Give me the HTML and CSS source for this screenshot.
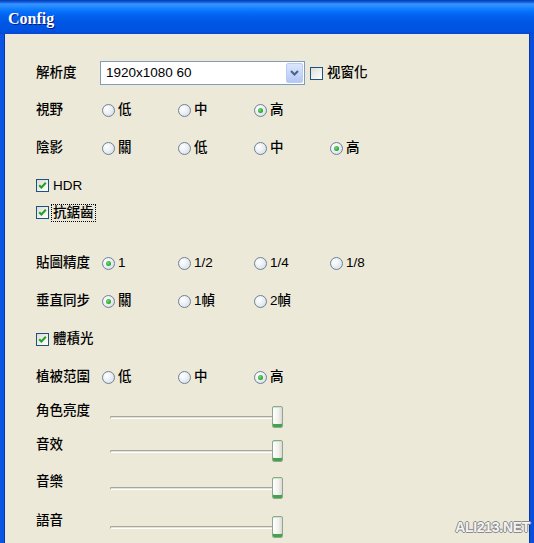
FILE: index.html
```html
<!DOCTYPE html>
<html>
<head>
<meta charset="utf-8">
<link rel="stylesheet" href="styles.css">
</head>
<body>
<div class="window">
  <div class="titlebar"><span class="title">Config</span></div>
  <div class="client">
    <div class="row row-res">
      <span class="label label-res">解析度</span>
      <div class="select">
        <span class="select-text">1920x1080 60</span>
        <span class="select-btn"><svg width="9" height="6" viewBox="0 0 9 6"><path d="M1 1 L4.5 4.5 L8 1" fill="none" stroke="#4D6185" stroke-width="2"/></svg></span>
      </div>
      <span class="check check-inline"><span class="box"></span><span class="check-text">视窗化</span></span>
    </div>

    <div class="row row-radio first-radio">
      <span class="label">視野</span>
      <span class="opt"><span class="radio"></span>低</span>
      <span class="opt"><span class="radio"></span>中</span>
      <span class="opt"><span class="radio on"></span>高</span>
    </div>
    <div class="row row-radio">
      <span class="label">陰影</span>
      <span class="opt"><span class="radio"></span>關</span>
      <span class="opt"><span class="radio"></span>低</span>
      <span class="opt"><span class="radio"></span>中</span>
      <span class="opt"><span class="radio on"></span>高</span>
    </div>

    <div class="row row-check first-check">
      <span class="check"><span class="box on"><svg width="9" height="9" viewBox="0 0 9 9"><path d="M1.2 4.2 L3.4 6.5 L7.8 1.8" fill="none" stroke="#21A121" stroke-width="2"/></svg></span><span class="check-text">HDR</span></span>
    </div>
    <div class="row row-check">
      <span class="check"><span class="box on"><svg width="9" height="9" viewBox="0 0 9 9"><path d="M1.2 4.2 L3.4 6.5 L7.8 1.8" fill="none" stroke="#21A121" stroke-width="2"/></svg></span><span class="check-text focus">抗鋸齒</span></span>
    </div>

    <div class="row row-radio gap-before">
      <span class="label">貼圖精度</span>
      <span class="opt"><span class="radio on"></span>1</span>
      <span class="opt"><span class="radio"></span>1/2</span>
      <span class="opt"><span class="radio"></span>1/4</span>
      <span class="opt"><span class="radio"></span>1/8</span>
    </div>
    <div class="row row-radio">
      <span class="label">垂直同步</span>
      <span class="opt"><span class="radio on"></span>關</span>
      <span class="opt"><span class="radio"></span>1幀</span>
      <span class="opt"><span class="radio"></span>2幀</span>
    </div>
    <div class="row row-radio">
      <span class="check"><span class="box on"><svg width="9" height="9" viewBox="0 0 9 9"><path d="M1.2 4.2 L3.4 6.5 L7.8 1.8" fill="none" stroke="#21A121" stroke-width="2"/></svg></span><span class="check-text">體積光</span></span>
    </div>
    <div class="row row-radio">
      <span class="label">植被范圍</span>
      <span class="opt"><span class="radio"></span>低</span>
      <span class="opt"><span class="radio"></span>中</span>
      <span class="opt"><span class="radio on"></span>高</span>
    </div>

    <div class="row row-slider s1">
      <span class="slabel">角色亮度</span>
      <div class="slider"><span class="track"></span><span class="thumb"></span></div>
    </div>
    <div class="row row-slider s2">
      <span class="slabel">音效</span>
      <div class="slider"><span class="track"></span><span class="thumb"></span></div>
    </div>
    <div class="row row-slider s3">
      <span class="slabel">音樂</span>
      <div class="slider"><span class="track"></span><span class="thumb"></span></div>
    </div>
    <div class="row row-slider s4">
      <span class="slabel">語音</span>
      <div class="slider"><span class="track"></span><span class="thumb"></span></div>
    </div>
  </div>
  <div class="watermark">ALI213.NET</div>
</div>
</body>
</html>
```

FILE: styles.css
```css
* { box-sizing: border-box; }
html, body {
  margin: 0;
  padding: 0;
  width: 534px;
  height: 543px;
  overflow: hidden;
  background: #ECE9D8;
}
body {
  font-family: "Liberation Sans", "Noto Sans CJK TC", sans-serif;
  font-size: 13.5px;
  font-weight: 500;
  color: #000;
}
.window {
  width: 534px;
  height: 543px;
  display: flex;
  flex-direction: column;
  position: relative;
}
.titlebar {
  height: 34px;
  flex: none;
  display: flex;
  align-items: center;
  padding: 4px 0 0 8px;
  background: linear-gradient(to bottom,
    #0A3C9E 0px, #0A5AE8 2px, #3A93FF 4px, #288EFF 6px, #127DFF 9px,
    #036FFC 12px, #0262EE 16px, #0057E5 22px, #0054E3 28px, #0050DD 32px, #0A45C8 34px);
}
.title {
  font-family: "Liberation Serif", serif;
  font-weight: bold;
  font-size: 16px;
  color: #fff;
  text-shadow: 1px 1px 0 #0A1883;
}
.client {
  flex: 1;
  display: flex;
  flex-direction: column;
  padding: 27px 0 0 32px;
  border-left: 4px solid #0A55E6;
  border-right: 4px solid #0A4FDC;
  box-shadow: inset 1px 0 0 #0838A8, inset -1px 0 0 #0838A8;
}
.row {
  display: flex;
  align-items: center;
  flex: none;
}
.label {
  width: 66px;
  flex: none;
  line-height: 16px;
}
.row-res { height: 24px; }
.label-res { width: 64px; }
.select {
  width: 205px;
  height: 24px;
  border: 1px solid #7F9DB9;
  background: #fff;
  display: flex;
  align-items: center;
  justify-content: space-between;
  padding: 1px;
}
.select-text {
  font-size: 13.5px;
  font-weight: normal;
  padding-left: 4px;
  line-height: 16px;
}
.select-btn {
  width: 17px;
  height: 20px;
  display: flex;
  align-items: center;
  justify-content: center;
  border: 1px solid #B9CCF6;
  border-radius: 2px;
  background: linear-gradient(to bottom, #DCE6FD, #C4D5FA 60%, #B4C7F4);
}
.check {
  display: flex;
  align-items: center;
  line-height: 16px;
}
.check-inline { margin-left: 5px; }
.box {
  width: 13px;
  height: 13px;
  flex: none;
  border: 1px solid #1C5180;
  background: linear-gradient(135deg, #DCDCD7, #fff);
  display: flex;
  align-items: center;
  justify-content: center;
  margin-right: 3px;
}
.check-text { padding: 0 1px; }
.focus { outline: 1px dotted #000; outline-offset: 0; }
.row-radio { height: 38px; }
.first-radio { margin-top: 6px; }
.row-check { height: 27px; }
.first-check { margin-top: 5px; }
.gap-before { margin-top: 18px; }
.opt {
  width: 76px;
  flex: none;
  display: flex;
  align-items: center;
  line-height: 16px;
}
.radio {
  width: 13px;
  height: 13px;
  flex: none;
  border-radius: 50%;
  border: 1px solid #6F8296;
  background: radial-gradient(circle at 35% 35%, #fff 0%, #EEF2F6 40%, #CFD6DD 100%);
  margin-right: 3px;
  display: flex;
  align-items: center;
  justify-content: center;
}
.radio.on::after {
  content: "";
  width: 5px;
  height: 5px;
  border-radius: 50%;
  background: radial-gradient(circle at 40% 40%, #7BD97B, #21A121 70%);
}
.row-slider {
  height: 22px;
  align-items: flex-start;
}
.s1 { margin-top: 10px; }
.s2 { margin-top: 12px; }
.s3 { margin-top: 15px; }
.s4 { margin-top: 17px; }
.slabel {
  width: 74px;
  flex: none;
  line-height: 16px;
  margin-top: -3px;
}
.slider {
  position: relative;
  width: 173px;
  height: 22px;
}
.track {
  position: absolute;
  left: 0;
  right: 6px;
  top: 10px;
  height: 3px;
  border-radius: 2px;
  border-top: 1px solid #A7A69E;
  border-left: 1px solid #A7A69E;
  border-bottom: 1px solid #fff;
  background: #E4E2D6;
}
.thumb {
  position: absolute;
  right: 0;
  top: 0;
  width: 11px;
  height: 22px;
  border: 1px solid #8FA68F;
  border-radius: 2px;
  background: linear-gradient(to right, #fff, #F2F1EC 60%, #DAD9D2);
  box-shadow: inset 0 -3px 0 #3FA44C, inset 0 1px 0 #C6E8C6;
}
.watermark {
  position: absolute;
  right: 4px;
  bottom: 8px;
  font-family: "Liberation Sans", sans-serif;
  font-weight: bold;
  font-size: 14px;
  color: #F4F4F4;
  letter-spacing: -0.3px;
  text-shadow: -1px 0 #8A8A8A, 1px 0 #8A8A8A, 0 -1px #8A8A8A, 0 1px #8A8A8A;
}
```
